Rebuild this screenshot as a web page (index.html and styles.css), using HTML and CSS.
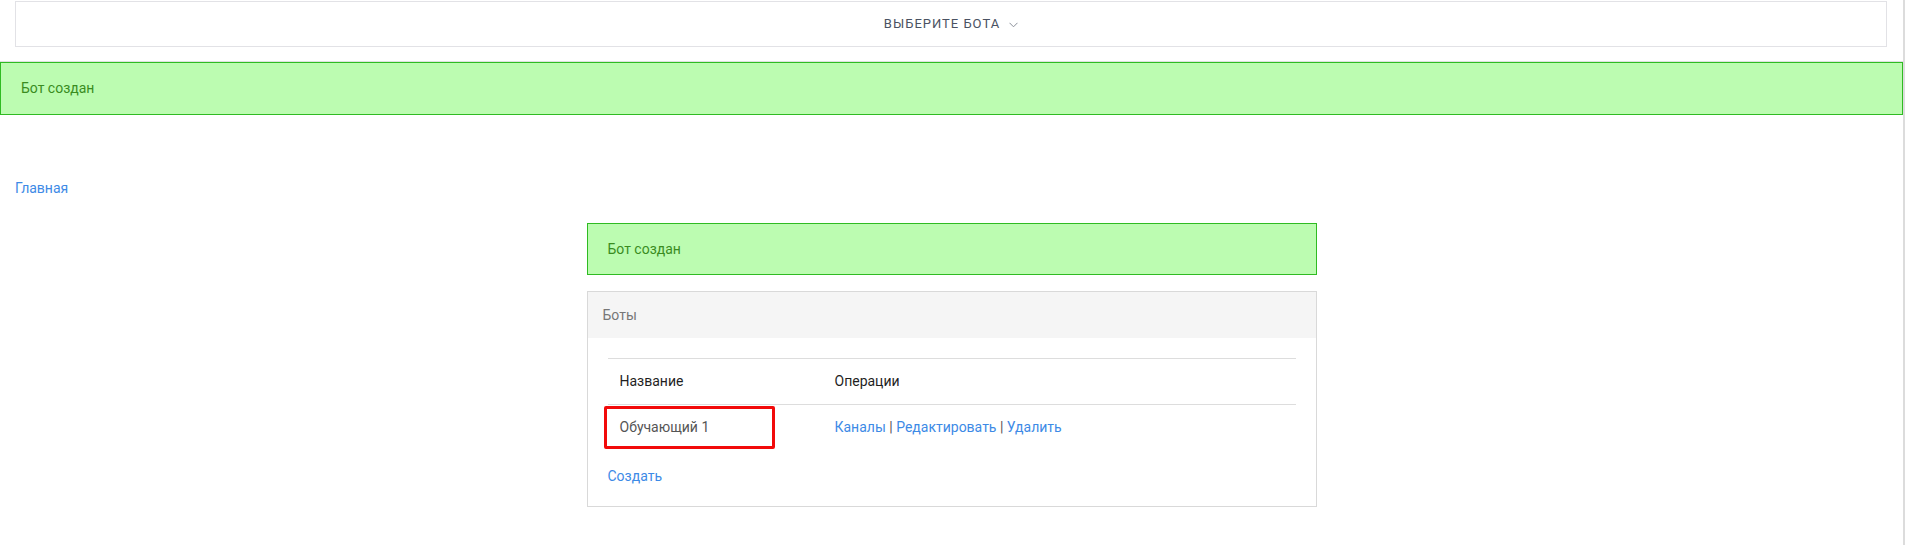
FILE: index.html
```html
<!DOCTYPE html>
<html lang="ru">
<head>
<meta charset="utf-8">
<title>Боты</title>
<link rel="stylesheet" href="styles.css">
</head>
<body>
<div class="page">
  <header class="topbar">
    <div class="bot-select">
      <span class="bot-select-label">Выберите бота</span>
      <svg class="chev" width="9" height="6" viewBox="0 0 9 6"><polyline points="0.5,0.8 4.5,4.8 8.5,0.8" fill="none" stroke="#8a8f99" stroke-width="1"/></svg>
    </div>
  </header>
  <div class="alert alert-wide">Бот создан</div>
  <nav class="crumbs"><a href="#">Главная</a></nav>
  <main class="center">
    <div class="alert">Бот создан</div>
    <section class="panel">
      <div class="panel-head">Боты</div>
      <div class="panel-body">
        <table class="bots">
          <thead>
            <tr><th class="c-name">Название</th><th>Операции</th></tr>
          </thead>
          <tbody>
            <tr>
              <td class="c-name mark-cell">Обучающий 1<span class="mark"></span></td>
              <td><a href="#">Каналы</a> <span class="sep">|</span> <a href="#">Редактировать</a> <span class="sep">|</span> <a href="#">Удалить</a></td>
            </tr>
          </tbody>
        </table>
        <a class="create" href="#">Создать</a>
      </div>
    </section>
  </main>
</div>
</body>
</html>
```
FILE: styles.css
```css
html, body {
  margin: 0;
  padding: 0;
  background: #fff;
}
body {
  font-family: Roboto, "Noto Sans", Arial, sans-serif;
  font-size: 14px;
  color: #555;
}
a {
  color: #3d8ae6;
  text-decoration: none;
}
.page {
  width: 1903px;
  min-height: 545px;
  border-right: 2px solid #dcdcdc;
  box-sizing: content-box;
}
.topbar {
  height: 62px;
  border-bottom: 1px solid #e0e0e0;
  padding: 1px 16px 0 15px;
  box-sizing: border-box;
}
.bot-select {
  height: 46px;
  border: 1px solid #e2e2e6;
  box-sizing: border-box;
  display: flex;
  align-items: center;
  justify-content: center;
  gap: 9px;
}
.bot-select-label {
  text-transform: uppercase;
  font-size: 13px;
  font-weight: 400;
  letter-spacing: 1px;
  color: #4a5262;
  line-height: 20px;
}
.chev {
  display: block;
  margin-top: 1px;
}
.alert {
  background: #bcfcb1;
  border: 1px solid #2fbb22;
  color: #3a8c1f;
  line-height: 20px;
  padding: 15px 20px;
}
.alert-wide {
  padding: 15px 20px 16px 20px;
}
.crumbs {
  padding: 63px 15px 0;
  line-height: 20px;
  height: 20px;
}
.center {
  width: 730px;
  margin: 25px auto 0;
}
.panel {
  margin-top: 16px;
  border: 1px solid #d9d9d9;
}
.panel-head {
  background: #f5f5f5;
  color: #777;
  padding: 13px 15px;
  line-height: 20px;
}
.panel-body {
  padding: 20px 20px 20px;
}
.bots {
  width: 100%;
  border-collapse: collapse;
}
.bots th, .bots td {
  text-align: left;
  padding: 12px 12px;
  line-height: 21px;
  vertical-align: middle;
}
.bots th {
  font-weight: 400;
  color: #1f1f1f;
  border-top: 1px solid #dddddd;
  border-bottom: 1px solid #dddddd;
}
.bots .c-name {
  width: 191px;
}
.sep {
  color: #555;
}
.mark-cell {
  position: relative;
}
.mark {
  position: absolute;
  left: -4px;
  top: 1px;
  width: 171px;
  height: 43px;
  border: 3px solid #f20a0a;
  border-radius: 2px;
  box-sizing: border-box;
}
.create {
  display: block;
  margin-top: 16px;
  line-height: 20px;
  width: max-content;
}
```
